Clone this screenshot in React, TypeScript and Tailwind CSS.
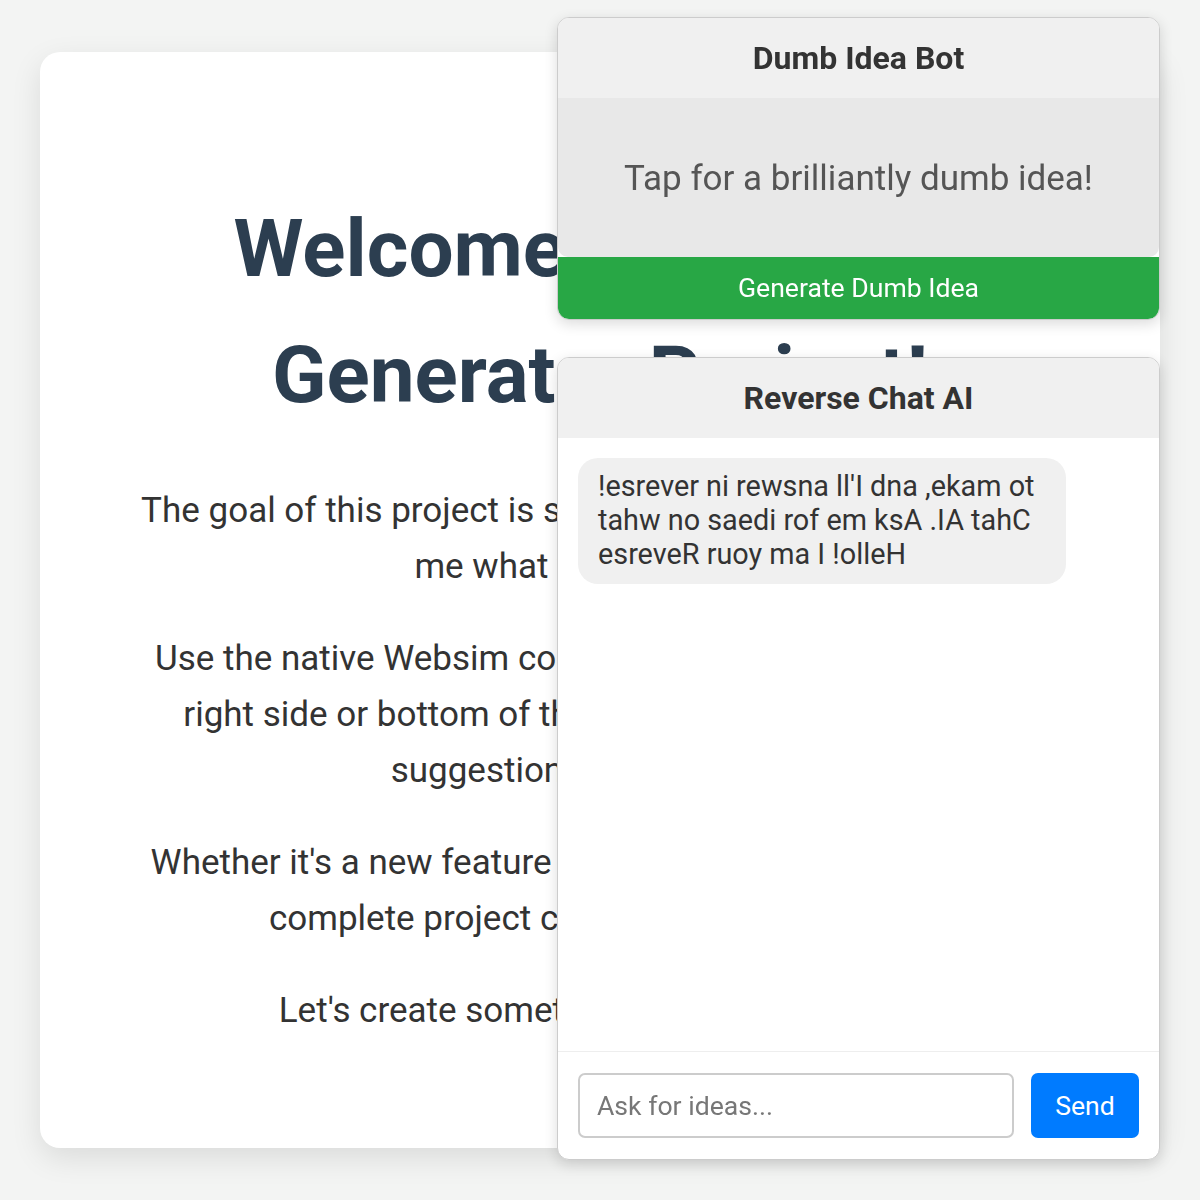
import React from 'react'

const font = { fontFamily: 'Roboto, "Noto Sans", Arial, sans-serif' }

function IdeaBot() {
  return (
    <div className="fixed top-[17px] right-[40px] w-[603px] bg-white border border-[#ccc] rounded-[12px] shadow-[0_4px_14px_rgba(0,0,0,0.14)] overflow-hidden">
      <div className="h-[80px] bg-[#f0f0f0] flex items-center justify-center">
        <h2 className="text-[32px] font-bold text-[#333]">Dumb Idea Bot</h2>
      </div>
      <div className="h-[159px] bg-[#e8e8e8] rounded-b-[10px] flex items-center justify-center pt-[3px]">
        <p className="text-[35px] text-[#555]">Tap for a brilliantly dumb idea!</p>
      </div>
      <button className="w-full h-[62px] bg-[#28a745] text-white text-[26.6px] rounded-b-[11px]">
        Generate Dumb Idea
      </button>
    </div>
  )
}

function ReverseChat() {
  return (
    <div className="fixed top-[357px] right-[40px] w-[603px] h-[803px] bg-white border border-[#ccc] rounded-[12px] shadow-[0_4px_14px_rgba(0,0,0,0.14)] overflow-hidden flex flex-col">
      <div className="h-[80px] shrink-0 bg-[#f0f0f0] flex items-center justify-center">
        <h2 className="text-[32px] font-bold text-[#333]">Reverse Chat AI</h2>
      </div>
      <div className="flex-1 px-5 pt-[20px]">
        <div className="w-[488px] bg-[#f0f0f0] rounded-[20px] px-5 pt-[11px] pb-[13px] text-[28.8px] leading-[34px] text-[#333]">
          !esrever ni rewsna ll'I dna ,ekam ot
          <br />
          tahw no saedi rof em ksA .IA tahC
          <br />
          esreveR ruoy ma I !olleH
        </div>
      </div>
      <div className="shrink-0 border-t border-[#eee] px-5 py-[21px] flex gap-[17px]">
        <input
          className="flex-1 h-[65px] border-2 border-[#ccc] rounded-[7px] px-[17px] text-[26.6px] text-[#333] placeholder:text-[#777] outline-none"
          placeholder="Ask for ideas..."
          style={font}
        />
        <button className="w-[108px] h-[65px] bg-[#007bff] text-white text-[26.6px] rounded-[7px]">Send</button>
      </div>
    </div>
  )
}

export default function App() {
  return (
    <div className="min-h-[1200px] bg-[#f3f4f3] pt-[52px] px-10 pb-10" style={font}>
      <div className="bg-white rounded-[20px] shadow-[0_10px_30px_rgba(0,0,0,0.1)] pt-[134px] pb-[109px] px-10 text-center">
        <h1 className="text-[80px] leading-[126px] font-bold text-[#2c3e50] mb-[45px]">
          Welcome to the Idea
          <br />
          Generator Project!
        </h1>
        <div className="text-[35px] leading-[56px] text-[#333] space-y-[36px]">
          <p>
            The goal of this project is simple: you share an idea and tell
            <br />
            me what you want to do
          </p>
          <p>
            Use the native Websim comments section, located on the
            <br />
            right side or bottom of the screen, to leave me all your
            <br />
            suggestions and feedback.
          </p>
          <p>
            Whether it's a new feature idea, a tiny tweak, a bug fix, or a
            <br />
            complete project change, I'd love to hear it!
          </p>
          <p>Let's create something amazing together!</p>
        </div>
      </div>
      <IdeaBot />
      <ReverseChat />
    </div>
  )
}
